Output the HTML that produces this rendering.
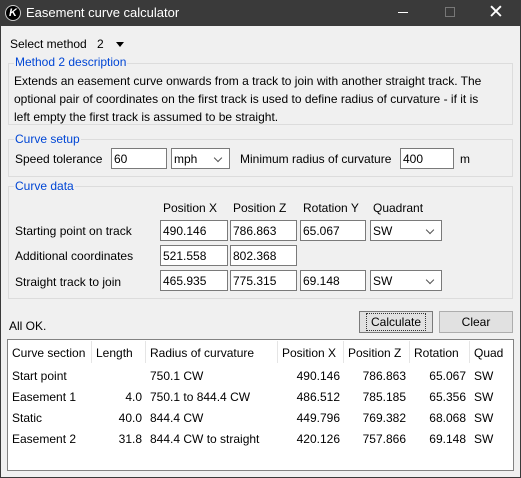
<!DOCTYPE html><html><head><style>
*{margin:0;padding:0;box-sizing:border-box}
body{width:521px;height:478px;background:#3a3a3a;font-family:"Liberation Sans",sans-serif;font-size:12px;color:#000;position:relative;overflow:hidden}
.a{position:absolute;white-space:nowrap}
#w{position:absolute;left:1px;top:26px;width:519px;height:451px;background:#f0f0f0}
.g{position:absolute;border:1px solid #dcdcdc}
.lg{position:absolute;color:#0046d5;background:#f0f0f0;padding:0 1px;font-size:12px}
.in{position:absolute;background:#fff;border:1px solid #7a7a7a;height:21px;padding:3px 2px;line-height:14px}
.sel:after{content:"";position:absolute;right:8px;top:6px;width:5px;height:5px;border-right:1px solid #555;border-bottom:1px solid #555;transform:rotate(45deg)}
.btn{position:absolute;background:#e1e1e1;border:1px solid #adadad;text-align:center;line-height:20px;height:22px}
.r{text-align:right}
</style></head><body>
<div class="a" style="left:5px;top:5px;width:16px;height:16px;border-radius:50%;background:#000;border:1px solid #ccc;color:#fff;font-size:11px;font-style:italic;font-weight:bold;text-align:center;line-height:14px">K</div>
<div class="a" style="left:26px;top:5px;color:#fff;font-size:13px">Easement curve calculator</div>
<div class="a" style="left:398px;top:12px;width:10px;height:1px;background:#fff"></div>
<div class="a" style="left:445px;top:7px;width:10px;height:10px;border:1px solid #777"></div>
<div class="a" style="left:488px;top:1px;color:#fff;font-size:19px;font-weight:lighter">✕</div>
<div id="w"></div>
<div class="a" style="left:10px;top:37px">Select method</div>
<div class="a" style="left:97px;top:37px">2</div>
<div class="a" style="left:116px;top:42px;border:4px solid transparent;border-top:5px solid #000"></div>

<div class="g" style="left:8px;top:63px;width:505px;height:62px"></div>
<div class="lg" style="left:14px;top:55px">Method 2 description</div>
<div class="a" style="left:14px;top:72px;line-height:18px">Extends an easement curve onwards from a track to join with another straight track. The<br>optional pair of coordinates on the first track is used to define radius of curvature - if it is<br>left empty the first track is assumed to be straight.</div>

<div class="g" style="left:8px;top:139px;width:505px;height:38px"></div>
<div class="lg" style="left:14px;top:132px">Curve setup</div>
<div class="a" style="left:15px;top:152px">Speed tolerance</div>
<div class="in" style="left:111px;top:148px;width:56px">60</div>
<div class="in sel" style="left:171px;top:148px;width:59px">mph</div>
<div class="a" style="left:240px;top:152px">Minimum radius of curvature</div>
<div class="in" style="left:400px;top:148px;width:54px">400</div>
<div class="a" style="left:460px;top:152px">m</div>

<div class="g" style="left:8px;top:186px;width:505px;height:113px"></div>
<div class="lg" style="left:14px;top:179px">Curve data</div>
<div class="a" style="left:163px;top:201px">Position X</div>
<div class="a" style="left:233px;top:201px">Position Z</div>
<div class="a" style="left:303px;top:201px">Rotation Y</div>
<div class="a" style="left:373px;top:201px">Quadrant</div>
<div class="a" style="left:15px;top:224px">Starting point on track</div>
<div class="a" style="left:15px;top:249px">Additional coordinates</div>
<div class="a" style="left:15px;top:275px">Straight track to join</div>
<div class="in" style="left:160px;top:220px;width:68px">490.146</div>
<div class="in" style="left:230px;top:220px;width:67px">786.863</div>
<div class="in" style="left:300px;top:220px;width:66px">65.067</div>
<div class="in sel" style="left:370px;top:220px;width:72px">SW</div>
<div class="in" style="left:160px;top:245px;width:68px">521.558</div>
<div class="in" style="left:230px;top:245px;width:67px">802.368</div>
<div class="in" style="left:160px;top:270px;width:68px">465.935</div>
<div class="in" style="left:230px;top:270px;width:67px">775.315</div>
<div class="in" style="left:300px;top:270px;width:66px">69.148</div>
<div class="in sel" style="left:370px;top:270px;width:72px">SW</div>

<div class="a" style="left:9px;top:319px">All OK.</div>
<div class="btn" style="left:359px;top:311px;width:74px;border-color:#7a7a7a"><span style="outline:1px dotted #333;padding:0 4px;display:inline-block;line-height:16px;margin-top:1px">Calculate</span></div>
<div class="btn" style="left:439px;top:311px;width:74px">Clear</div>

<div class="a" style="left:7px;top:339px;width:507px;height:132px;background:#fff;border:1px solid #828282"></div>
<div class="a" style="left:91px;top:341px;width:1px;height:22px;background:#e5e5e5"></div>
<div class="a" style="left:145px;top:341px;width:1px;height:22px;background:#e5e5e5"></div>
<div class="a" style="left:277px;top:341px;width:1px;height:22px;background:#e5e5e5"></div>
<div class="a" style="left:343px;top:341px;width:1px;height:22px;background:#e5e5e5"></div>
<div class="a" style="left:409px;top:341px;width:1px;height:22px;background:#e5e5e5"></div>
<div class="a" style="left:469px;top:341px;width:1px;height:22px;background:#e5e5e5"></div>
<div class="a" style="left:12px;top:346px">Curve section</div>
<div class="a" style="left:96px;top:346px">Length</div>
<div class="a" style="left:150px;top:346px">Radius of curvature</div>
<div class="a" style="left:282px;top:346px">Position X</div>
<div class="a" style="left:348px;top:346px">Position Z</div>
<div class="a" style="left:414px;top:346px">Rotation</div>
<div class="a" style="left:474px;top:346px">Quad</div>

<div class="a" style="left:12px;top:369px">Start point</div>
<div class="a" style="left:150px;top:369px">750.1 CW</div>
<div class="a r" style="left:280px;top:369px;width:60px">490.146</div>
<div class="a r" style="left:346px;top:369px;width:60px">786.863</div>
<div class="a r" style="left:406px;top:369px;width:60px">65.067</div>
<div class="a" style="left:474px;top:369px">SW</div>

<div class="a" style="left:12px;top:390px">Easement 1</div>
<div class="a r" style="left:90px;top:390px;width:52px">4.0</div>
<div class="a" style="left:150px;top:390px">750.1 to 844.4 CW</div>
<div class="a r" style="left:280px;top:390px;width:60px">486.512</div>
<div class="a r" style="left:346px;top:390px;width:60px">785.185</div>
<div class="a r" style="left:406px;top:390px;width:60px">65.356</div>
<div class="a" style="left:474px;top:390px">SW</div>

<div class="a" style="left:12px;top:411px">Static</div>
<div class="a r" style="left:90px;top:411px;width:52px">40.0</div>
<div class="a" style="left:150px;top:411px">844.4 CW</div>
<div class="a r" style="left:280px;top:411px;width:60px">449.796</div>
<div class="a r" style="left:346px;top:411px;width:60px">769.382</div>
<div class="a r" style="left:406px;top:411px;width:60px">68.068</div>
<div class="a" style="left:474px;top:411px">SW</div>

<div class="a" style="left:12px;top:432px">Easement 2</div>
<div class="a r" style="left:90px;top:432px;width:52px">31.8</div>
<div class="a" style="left:150px;top:432px">844.4 CW to straight</div>
<div class="a r" style="left:280px;top:432px;width:60px">420.126</div>
<div class="a r" style="left:346px;top:432px;width:60px">757.866</div>
<div class="a r" style="left:406px;top:432px;width:60px">69.148</div>
<div class="a" style="left:474px;top:432px">SW</div>
</body></html>
